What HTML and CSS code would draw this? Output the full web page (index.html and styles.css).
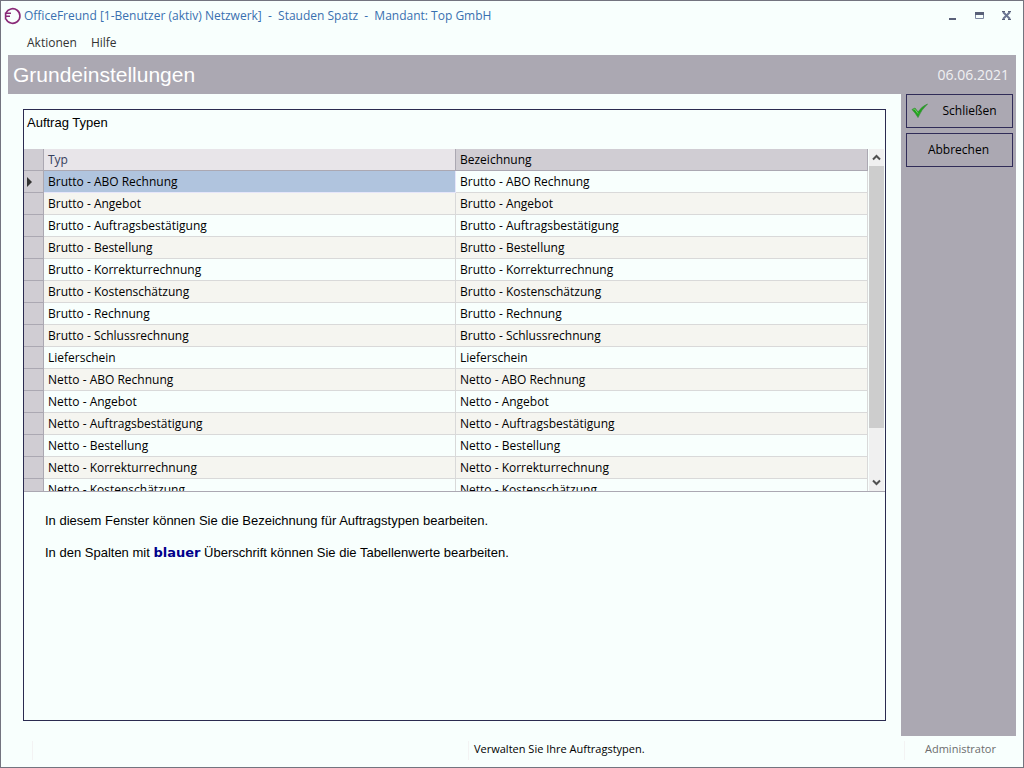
FILE: index.html
```html
<!DOCTYPE html>
<html lang="de">
<head>
<meta charset="utf-8">
<title>OfficeFreund - Grundeinstellungen</title>
<link rel="stylesheet" href="styles.css">
</head>
<body>
<div class="window">
  <header class="titlebar">
    <svg class="logo" width="18" height="18" viewBox="0 0 18 18" fill="none" stroke="#8a2a78" stroke-width="1.6"><path d="M2 6A7.3 7.3 0 1 1 2 12"/><path d="M1 6.2h6M1 9.2h5M1.6 5.5v7"/></svg>
    <h1 class="caption">OfficeFreund [1-Benutzer (aktiv) Netzwerk]&nbsp; -&nbsp; Stauden Spatz&nbsp; -&nbsp; Mandant: Top GmbH</h1>
    <div class="controls">
      <button class="control" type="button" aria-label="Minimieren"><svg width="11" height="11" viewBox="0 0 11 11"><path d="M2 7h7v2H2z" fill="#596078"/></svg></button>
      <button class="control" type="button" aria-label="Maximieren"><svg width="11" height="11" viewBox="0 0 11 11"><path d="M1.500 1.500h8v6h-8z" fill="none" stroke="#7c86a0"/><path d="M1 1h9v3H1z" fill="#596078"/></svg></button>
      <button class="control" type="button" aria-label="Fenster schließen"><svg width="11" height="11" viewBox="0 0 11 11"><path d="M2 1l7 7M9 1l-7 7" stroke="#6b7592" stroke-width="2"/><path d="M1 .5h3M7 .5h3M1 8.500h3M7 8.500h3" stroke="#596078"/></svg></button>
    </div>
  </header>
  <nav class="menu">
    <button class="menu-item" type="button">Aktionen</button>
    <button class="menu-item" type="button">Hilfe</button>
  </nav>
  <div class="banner">
    <h2 class="banner-title">Grundeinstellungen</h2>
    <time class="banner-date" datetime="2021-06-06">06.06.2021</time>
  </div>
  <div class="body">
    <main class="content">
      <section class="panel">
        <h3 class="panel-title">Auftrag Typen</h3>
        <div class="grid">
          <div class="grid-view">
            <table class="table">
              <colgroup><col class="col-mark"><col><col></colgroup>
              <thead><tr><th></th><th class="sorted" scope="col">Typ</th><th scope="col">Bezeichnung</th></tr></thead>
              <tbody>
                <tr class="current"><td><svg class="marker" width="5" height="10" viewBox="0 0 5 10"><path d="M0 0l5 5L0 10z" fill="#333"/></svg></td><td>Brutto - ABO Rechnung</td><td>Brutto - ABO Rechnung</td></tr>
                <tr><td></td><td>Brutto - Angebot</td><td>Brutto - Angebot</td></tr>
                <tr><td></td><td>Brutto - Auftragsbestätigung</td><td>Brutto - Auftragsbestätigung</td></tr>
                <tr><td></td><td>Brutto - Bestellung</td><td>Brutto - Bestellung</td></tr>
                <tr><td></td><td>Brutto - Korrekturrechnung</td><td>Brutto - Korrekturrechnung</td></tr>
                <tr><td></td><td>Brutto - Kostenschätzung</td><td>Brutto - Kostenschätzung</td></tr>
                <tr><td></td><td>Brutto - Rechnung</td><td>Brutto - Rechnung</td></tr>
                <tr><td></td><td>Brutto - Schlussrechnung</td><td>Brutto - Schlussrechnung</td></tr>
                <tr><td></td><td>Lieferschein</td><td>Lieferschein</td></tr>
                <tr><td></td><td>Netto - ABO Rechnung</td><td>Netto - ABO Rechnung</td></tr>
                <tr><td></td><td>Netto - Angebot</td><td>Netto - Angebot</td></tr>
                <tr><td></td><td>Netto - Auftragsbestätigung</td><td>Netto - Auftragsbestätigung</td></tr>
                <tr><td></td><td>Netto - Bestellung</td><td>Netto - Bestellung</td></tr>
                <tr><td></td><td>Netto - Korrekturrechnung</td><td>Netto - Korrekturrechnung</td></tr>
                <tr><td></td><td>Netto - Kostenschätzung</td><td>Netto - Kostenschätzung</td></tr>
              </tbody>
            </table>
          </div>
          <div class="scrollbar">
            <button class="scroll-button" type="button" aria-label="Nach oben"><svg width="9" height="7" viewBox="0 0 9 7"><path d="M1 5.500l3.500-3.500L8 5.500" fill="none" stroke="#505050" stroke-width="2"/></svg></button>
            <div class="track"><div class="thumb"></div></div>
            <button class="scroll-button" type="button" aria-label="Nach unten"><svg width="9" height="7" viewBox="0 0 9 7"><path d="M1 1.500l3.500 3.500L8 1.500" fill="none" stroke="#505050" stroke-width="2"/></svg></button>
          </div>
        </div>
        <div class="info">
          <p>In diesem Fenster können Sie die Bezeichnung für Auftragstypen bearbeiten.</p>
          <p>In den Spalten mit <b class="blue">blauer</b> Überschrift können Sie die Tabellenwerte bearbeiten.</p>
        </div>
      </section>
    </main>
    <aside class="sidebar">
      <button class="action action-check" type="button"><svg width="18" height="16" viewBox="0 0 18 16"><path d="M1 6.500L4 5l3 4Q11 3 16.500 1 10 7 7 14.500 4.500 10 1 6.500z" fill="#20a51c" stroke="#3b8b3c" stroke-width=".7"/><path d="M2.500 6.600l1.200-.5L7 10.500" fill="none" stroke="#74cf68"/></svg><span>Schließen</span></button>
      <button class="action" type="button"><span>Abbrechen</span></button>
    </aside>
  </div>
  <footer class="status">
    <div class="status-cell status-empty"></div>
    <div class="status-cell status-message">Verwalten Sie Ihre Auftragstypen.</div>
    <div class="status-cell status-user">Administrator</div>
  </footer>
</div>
</body>
</html>
```
FILE: styles.css
```css
* { box-sizing: border-box; }
body {
  margin: 0;
  background: #f8fffd;
  color: #000;
  font: 12px/16px "Open Sans", "Noto Sans", sans-serif;
}
h1, h2, h3, p { margin: 0; font-weight: 400; }
button {
  margin: 0;
  padding: 0;
  border: 0;
  background: none;
  color: inherit;
  font: inherit;
}
.window {
  display: flex;
  flex-direction: column;
  min-height: 100vh;
  border: 1px solid #73747f;
  padding: 0 7px;
}
.titlebar {
  display: flex;
  align-items: center;
  height: 30px;
  margin-left: -4px;
}
.logo { flex: none; margin-right: 2px; }
.caption { flex: 1; color: #3870b0; font-size: 12px; }
.controls { display: flex; gap: 16px; margin-right: 4px; }
.control { display: flex; }
.menu {
  display: flex;
  gap: 14px;
  height: 24px;
  padding-left: 19px;
  color: #333;
}
.banner {
  display: flex;
  align-items: center;
  justify-content: space-between;
  height: 39px;
  padding: 0 7px 0 5px;
  background: #aba8b2;
  color: #fff;
}
.banner-title { font: 21px/24px "Liberation Sans", Arial, sans-serif; }
.banner-date { color: #f0f0f2; font-size: 14px; }
.body { display: flex; flex: 1; }
.content { display: flex; flex: 1; min-width: 0; padding: 15px; }
.panel { flex: 1; min-width: 0; border: 1px solid #2b2b50; }
.panel-title {
  height: 39px;
  padding: 5px 3px;
  font: 13px/16px "Liberation Sans", Arial, sans-serif;
}
.grid {
  display: flex;
  height: 343px;
  padding-right: 1px;
  border-bottom: 1px solid #aba8b2;
}
.grid-view { flex: 1; overflow: hidden; margin-right: 1px; }
.table {
  width: 100%;
  table-layout: fixed;
  border-collapse: separate;
  border-spacing: 0;
}
.col-mark { width: 20px; }
.table th, .table td {
  height: 22px;
  padding: 1px 4px 0;
  border-right: 1px solid #d9d9d9;
  border-bottom: 1px solid #d9d9d9;
  line-height: 20px;
  text-align: left;
  font-weight: 400;
  white-space: nowrap;
}
.table th {
  background: #d0cdd3;
  border-color: #aba8b2;
}
.table .sorted { background: #e8e5e9; color: #36415c; }
.table td:first-child {
  padding: 0 3px;
  background: #d0cdd3;
  border-color: #aba8b2;
}
.table tbody tr:nth-child(even) { background: #f5f5f0; }
.table .current td:nth-child(2) { background: #b0c4de; border-color: #e6e6fa; }
.marker { display: block; }
.scrollbar {
  display: flex;
  flex-direction: column;
  width: 15px;
  background: #f0f0f0;
}
.scroll-button {
  display: flex;
  align-items: center;
  justify-content: center;
  height: 17px;
}
.track { flex: 1; }
.thumb { height: 85%; background: #cdcdcd; }
.info {
  display: flex;
  flex-direction: column;
  gap: 16px;
  padding: 21px;
  font: 13px/16px "Liberation Sans", Arial, sans-serif;
}
.blue { color: #00008b; font-family: "DejaVu Sans", Verdana, sans-serif; }
.sidebar {
  display: flex;
  flex-direction: column;
  gap: 5px;
  width: 115px;
  padding: 0 3px 0 5px;
  background: #aba8b2;
}
.action {
  display: flex;
  align-items: center;
  justify-content: center;
  height: 34px;
  padding: 0 6px 0 4px;
  border: 1px solid #302c58;
}
.action-check span { flex: 1; padding-left: 4px; }
.status { display: flex; height: 31px; padding: 5px 0 7px; font-size: 11px; }
.status-cell { border-left: 1px solid #f3f3f3; padding-left: 5px; }
.status-empty { flex: 1; margin-left: 24px; }
.status-message { flex: 1; }
.status-user { width: 112px; padding: 0; color: #6d6d6d; text-align: center; }
```
